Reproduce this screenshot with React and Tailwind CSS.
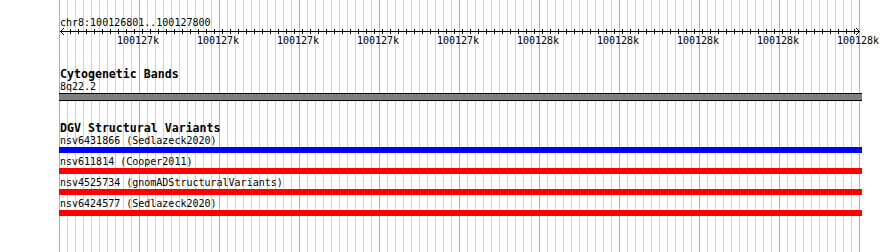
import React from "react";

const cells = Array.from({ length: 100 }, (_, i) => i);
const ticks = Array.from({ length: 99 }, (_, i) => 11 + 8 * i);
const labels = [
  "100127k",
  "100127k",
  "100127k",
  "100127k",
  "100127k",
  "100128k",
  "100128k",
  "100128k",
  "100128k",
  "100128k",
];

const variants = [
  { name: "nsv6431866 (Sedlazeck2020)", color: "bg-[#0000ff]" },
  { name: "nsv611814 (Cooper2011)", color: "bg-[#ff0000]" },
  { name: "nsv4525734 (gnomADStructuralVariants)", color: "bg-[#ff0000]" },
  { name: "nsv6424577 (Sedlazeck2020)", color: "bg-[#ff0000]" },
];

function Grid() {
  // background grid, 8px minor / 80px major
  return (
    <div className="absolute top-0 bottom-0 left-[59px] flex">
      {cells.map((i) => (
        <div key={i} className="flex h-full w-2 shrink-0">
          <div className={i % 10 === 0 ? "h-full w-px bg-[#88bce0]" : "h-full w-px bg-[#ace2e8]"} />
        </div>
      ))}
      <div className="h-full w-px bg-[#88bce0]" />
    </div>
  );
}

function Ruler() {
  return (
    <div className="pt-[17px]">
      <div className="pl-px text-[10px] leading-[12px]">chr8:100126801..100127800</div>
      <svg width="803" height="9" className="-mt-[2px] block" shapeRendering="crispEdges">
        <line x1="1" y1="4.5" x2="801" y2="4.5" stroke="#000" />
        {ticks.map((x) => (
          <line key={x} x1={x + 0.5} y1="2" x2={x + 0.5} y2="7" stroke="#000" />
        ))}
        <polyline points="5,1 1.5,4.5 5,8" fill="none" stroke="#000" shapeRendering="auto" />
        <polyline points="797,1 800.5,4.5 797,8" fill="none" stroke="#000" shapeRendering="auto" />
      </svg>
      <div className="-mt-px flex pl-[39px] text-[10px] leading-[12px]">
        {labels.map((l, i) => (
          <div key={i} className="w-20 shrink-0 text-center">
            {l}
          </div>
        ))}
      </div>
    </div>
  );
}

export default function App() {
  return (
    <div className="relative h-[252px] w-[890px] overflow-hidden bg-white font-['DejaVu_Sans_Mono',monospace] text-black">
      <Grid />
      <div className="relative pl-[59px]">
        <Ruler />

        <div className="mt-[21px]">
          <div className="pl-px text-[11.6px] font-bold leading-[13px]">Cytogenetic Bands</div>
          <div className="pl-px text-[10px] leading-[12px]">8q22.2</div>
          <div className="h-2 w-[803px] border-y border-black bg-[#808080]" />
        </div>

        <div className="mt-[21px]">
          <div className="pl-px text-[11.6px] font-bold leading-[13px]">DGV Structural Variants</div>
          {variants.map((v) => (
            <div key={v.name} className="pb-[3px]">
              <div className="pl-px text-[10px] leading-[12px]">{v.name}</div>
              <div className={`h-[6px] w-[803px] ${v.color}`} />
            </div>
          ))}
        </div>
      </div>
    </div>
  );
}
